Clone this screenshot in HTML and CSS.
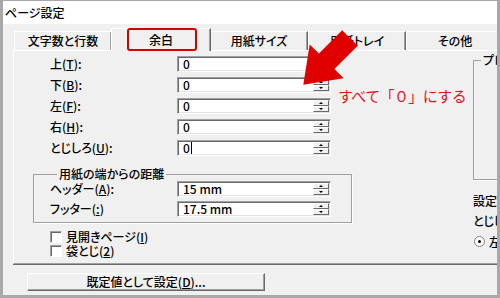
FILE: index.html
```html
<!DOCTYPE html>
<html lang="ja">
<head>
  <meta charset="UTF-8">
  <title>ページ設定</title>
  <link rel="stylesheet" href="styles.css">
</head>
<body>

  <div class="window">
    <div class="titlebar">ページ設定</div>

    <!-- Tabs -->
    <div class="tabs">
      <div class="tab">文字数と行数</div>
      <div class="tab active">余白</div>
      <div class="tab">用紙サイズ</div>
      <div class="tab">用紙トレイ</div>
      <div class="tab">その他</div>
    </div>

    <div class="panel">
      <div class="left">
        <div class="row">
          <label>上(<u>T</u>):</label>
          <div class="spin"><span class="val">0</span><span class="btns"><i class="up"></i><i class="down"></i></span></div>
        </div>
        <div class="row">
          <label>下(<u>B</u>):</label>
          <div class="spin"><span class="val">0</span><span class="btns"><i class="up"></i><i class="down"></i></span></div>
        </div>
        <div class="row">
          <label>左(<u>F</u>):</label>
          <div class="spin"><span class="val">0</span><span class="btns"><i class="up"></i><i class="down"></i></span></div>
        </div>
        <div class="row">
          <label>右(<u>H</u>):</label>
          <div class="spin"><span class="val">0</span><span class="btns"><i class="up"></i><i class="down"></i></span></div>
        </div>
        <div class="row">
          <label>とじしろ(<u>U</u>):</label>
          <div class="spin"><span class="val">0<span class="caret"></span></span><span class="btns"><i class="up"></i><i class="down"></i></span></div>
        </div>

        <fieldset class="group">
          <legend>用紙の端からの距離</legend>
          <div class="row">
            <label>ヘッダー(<u>A</u>):</label>
            <div class="spin"><span class="val">15 mm</span><span class="btns"><i class="up"></i><i class="down"></i></span></div>
          </div>
          <div class="row">
            <label>フッター(<u>:</u>)</label>
            <div class="spin"><span class="val">17.5 mm</span><span class="btns"><i class="up"></i><i class="down"></i></span></div>
          </div>
        </fieldset>

        <div class="checks">
          <div class="check"><span class="box"></span>見開きページ(<u>I</u>)</div>
          <div class="check"><span class="box"></span>袋とじ(<u>2</u>)</div>
        </div>
      </div>

      <div class="right">
        <fieldset class="preview"><legend>プレビュー</legend></fieldset>
        <div class="lines">
          <div class="line">設定対象(<u>Y</u>):</div>
          <div class="line">とじしろの位置(<u>G</u>):</div>
          <div class="radio"><span class="dot"></span>左(<u>L</u>)</div>
        </div>
      </div>
    </div>

    <div class="footer">
      <button class="btn">既定値として設定(<u>D</u>)...</button>
    </div>

    <!-- Annotations -->
    <div class="mark-tab"></div>
    <svg class="arrow" width="500" height="298" viewBox="0 0 500 298">
      <polygon fill="#e00000" points="357.8,45.8 334.4,69.1 343.6,78.3 303.3,84.7 309.7,44.4 318.9,53.6 342.2,30.2"/>
    </svg>
    <div class="note">すべて「０」にする</div>
  </div>

</body>
</html>
```

FILE: styles.css
```css
* {
  margin: 0;
  padding: 0;
  box-sizing: border-box;
}

body {
  width: 500px;
  height: 298px;
  overflow: hidden;
  font-family: "Noto Sans CJK JP", sans-serif;
  font-size: 12px;
  font-weight: 500;
  font-feature-settings: "palt";
  color: #000;
}

u {
  text-decoration: underline;
  text-underline-offset: 1px;
}

.window {
  position: relative;
  width: 500px;
  height: 298px;
  border: 3px solid #a8a8a8;
  border-top-width: 1px;
  background: #f0f0f0;
  overflow: hidden;
}

.titlebar {
  height: 23px;
  line-height: 23px;
  padding-left: 2px;
  background: #fff;
}

/* Tabs */
.tabs {
  display: flex;
  height: 22px;
  margin: 4px 0 0 11px;
}

.tab {
  flex-shrink: 0;
  width: 98px;
  height: 19px;
  margin-top: 3px;
  line-height: 18px;
  text-align: center;
  border-top: 1px solid #fff;
  border-left: 1px solid #fff;
  border-right: 1px solid #696969;
  box-shadow: inset -1px 0 #a0a0a0;
}

.tab.active {
  width: 100px;
  height: 23px;
  margin: 0 -1px;
  line-height: 22px;
  background: #f0f0f0;
  z-index: 1;
}

/* Panel */
.panel {
  display: flex;
  width: 520px;
  height: 214px;
  margin-left: 10px;
  border-top: 1px solid #fff;
  border-left: 1px solid #fff;
  border-bottom: 1px solid #a0a0a0;
  box-shadow: 0 1px 0 #696969;
}

.left {
  flex-shrink: 0;
  width: 459px;
  padding-top: 5px;
}

.row {
  display: flex;
  align-items: center;
  height: 16px;
  margin-bottom: 5px;
  padding-left: 36px;
}

.row label {
  width: 127px;
  line-height: 16px;
}

.spin {
  display: flex;
  width: 154px;
  height: 16px;
  background: #fff;
  border: 1px solid;
  border-color: #a0a0a0 #fff #fff #a0a0a0;
  box-shadow: inset 1px 1px #696969, inset -1px -1px #e3e3e3;
}

.val {
  display: flex;
  align-items: center;
  padding-left: 5px;
  line-height: 14px;
}

.caret {
  width: 1px;
  height: 12px;
  margin-left: 1px;
  background: #000;
}

.btns {
  display: flex;
  flex-direction: column;
  width: 16px;
  margin: 1px 1px 1px auto;
}

.btns i {
  flex: 1;
  display: flex;
  align-items: center;
  justify-content: center;
  background: #f0f0f0;
  border: 1px solid;
  border-color: #fff #696969 #696969 #fff;
}

.btns i::after {
  content: "";
  border-left: 2px solid transparent;
  border-right: 2px solid transparent;
}

.btns .up::after {
  border-bottom: 2px solid #000;
}

.btns .down::after {
  border-top: 2px solid #000;
}

/* Group box */
.group {
  width: 319px;
  margin: 11px 0 0 19px;
  padding: 0 0 5px 16px;
  border: 1px solid #a0a0a0;
  box-shadow: 1px 1px 0 #fff;
}

.group legend {
  margin-left: 7px;
  padding: 0 2px;
  line-height: 14px;
}

.group .row {
  padding-left: 0;
  margin-bottom: 4px;
}

.group .row:last-child {
  margin-bottom: 0;
}

.checks {
  padding: 7px 0 0 36px;
}

.check {
  display: flex;
  align-items: center;
  height: 14px;
  line-height: 14px;
}

.box {
  width: 12px;
  height: 12px;
  margin-right: 4px;
  background: #fff;
  border: 1px solid;
  border-color: #a0a0a0 #fff #fff #a0a0a0;
  box-shadow: inset 1px 1px #696969;
}

/* Right column */
.right {
  flex: 1;
  padding-top: 2px;
}

.preview {
  height: 127px;
  border: 1px solid #a0a0a0;
  box-shadow: 1px 1px 0 #fff;
}

.preview legend {
  margin-left: 7px;
  padding: 0 2px;
  line-height: 14px;
}

.lines {
  padding-top: 11px;
}

.line {
  line-height: 20px;
  white-space: nowrap;
}

.radio {
  display: flex;
  align-items: center;
  height: 20px;
  white-space: nowrap;
}

.dot {
  position: relative;
  width: 11px;
  height: 11px;
  margin: 0 4px 0 1px;
  border-radius: 50%;
  background: #fff;
  border: 1px solid #808080;
}

.dot::after {
  content: "";
  position: absolute;
  top: 3px;
  left: 3px;
  width: 3px;
  height: 3px;
  border-radius: 50%;
  background: #000;
}

/* Footer */
.footer {
  padding: 9px 0 0 24px;
}

.btn {
  width: 238px;
  height: 18px;
  font: inherit;
  font-feature-settings: "palt";
  line-height: 14px;
  color: #000;
  background: #f0f0f0;
  border: 1px solid;
  border-color: #fff #696969 #696969 #fff;
  box-shadow: inset -1px -1px #a0a0a0;
}

/* Annotations */
.mark-tab {
  position: absolute;
  left: 124px;
  top: 27px;
  width: 70px;
  height: 23px;
  border: 2px solid #d40000;
  border-radius: 3px;
  z-index: 2;
}

.arrow {
  position: absolute;
  left: -3px;
  top: -1px;
  z-index: 2;
}

.note {
  position: absolute;
  left: 335px;
  top: 86px;
  z-index: 2;
  color: #e0141e;
  font-size: 15px;
  font-weight: 400;
  font-feature-settings: normal;
  letter-spacing: -0.6px;
  line-height: 18px;
  white-space: nowrap;
}
```
